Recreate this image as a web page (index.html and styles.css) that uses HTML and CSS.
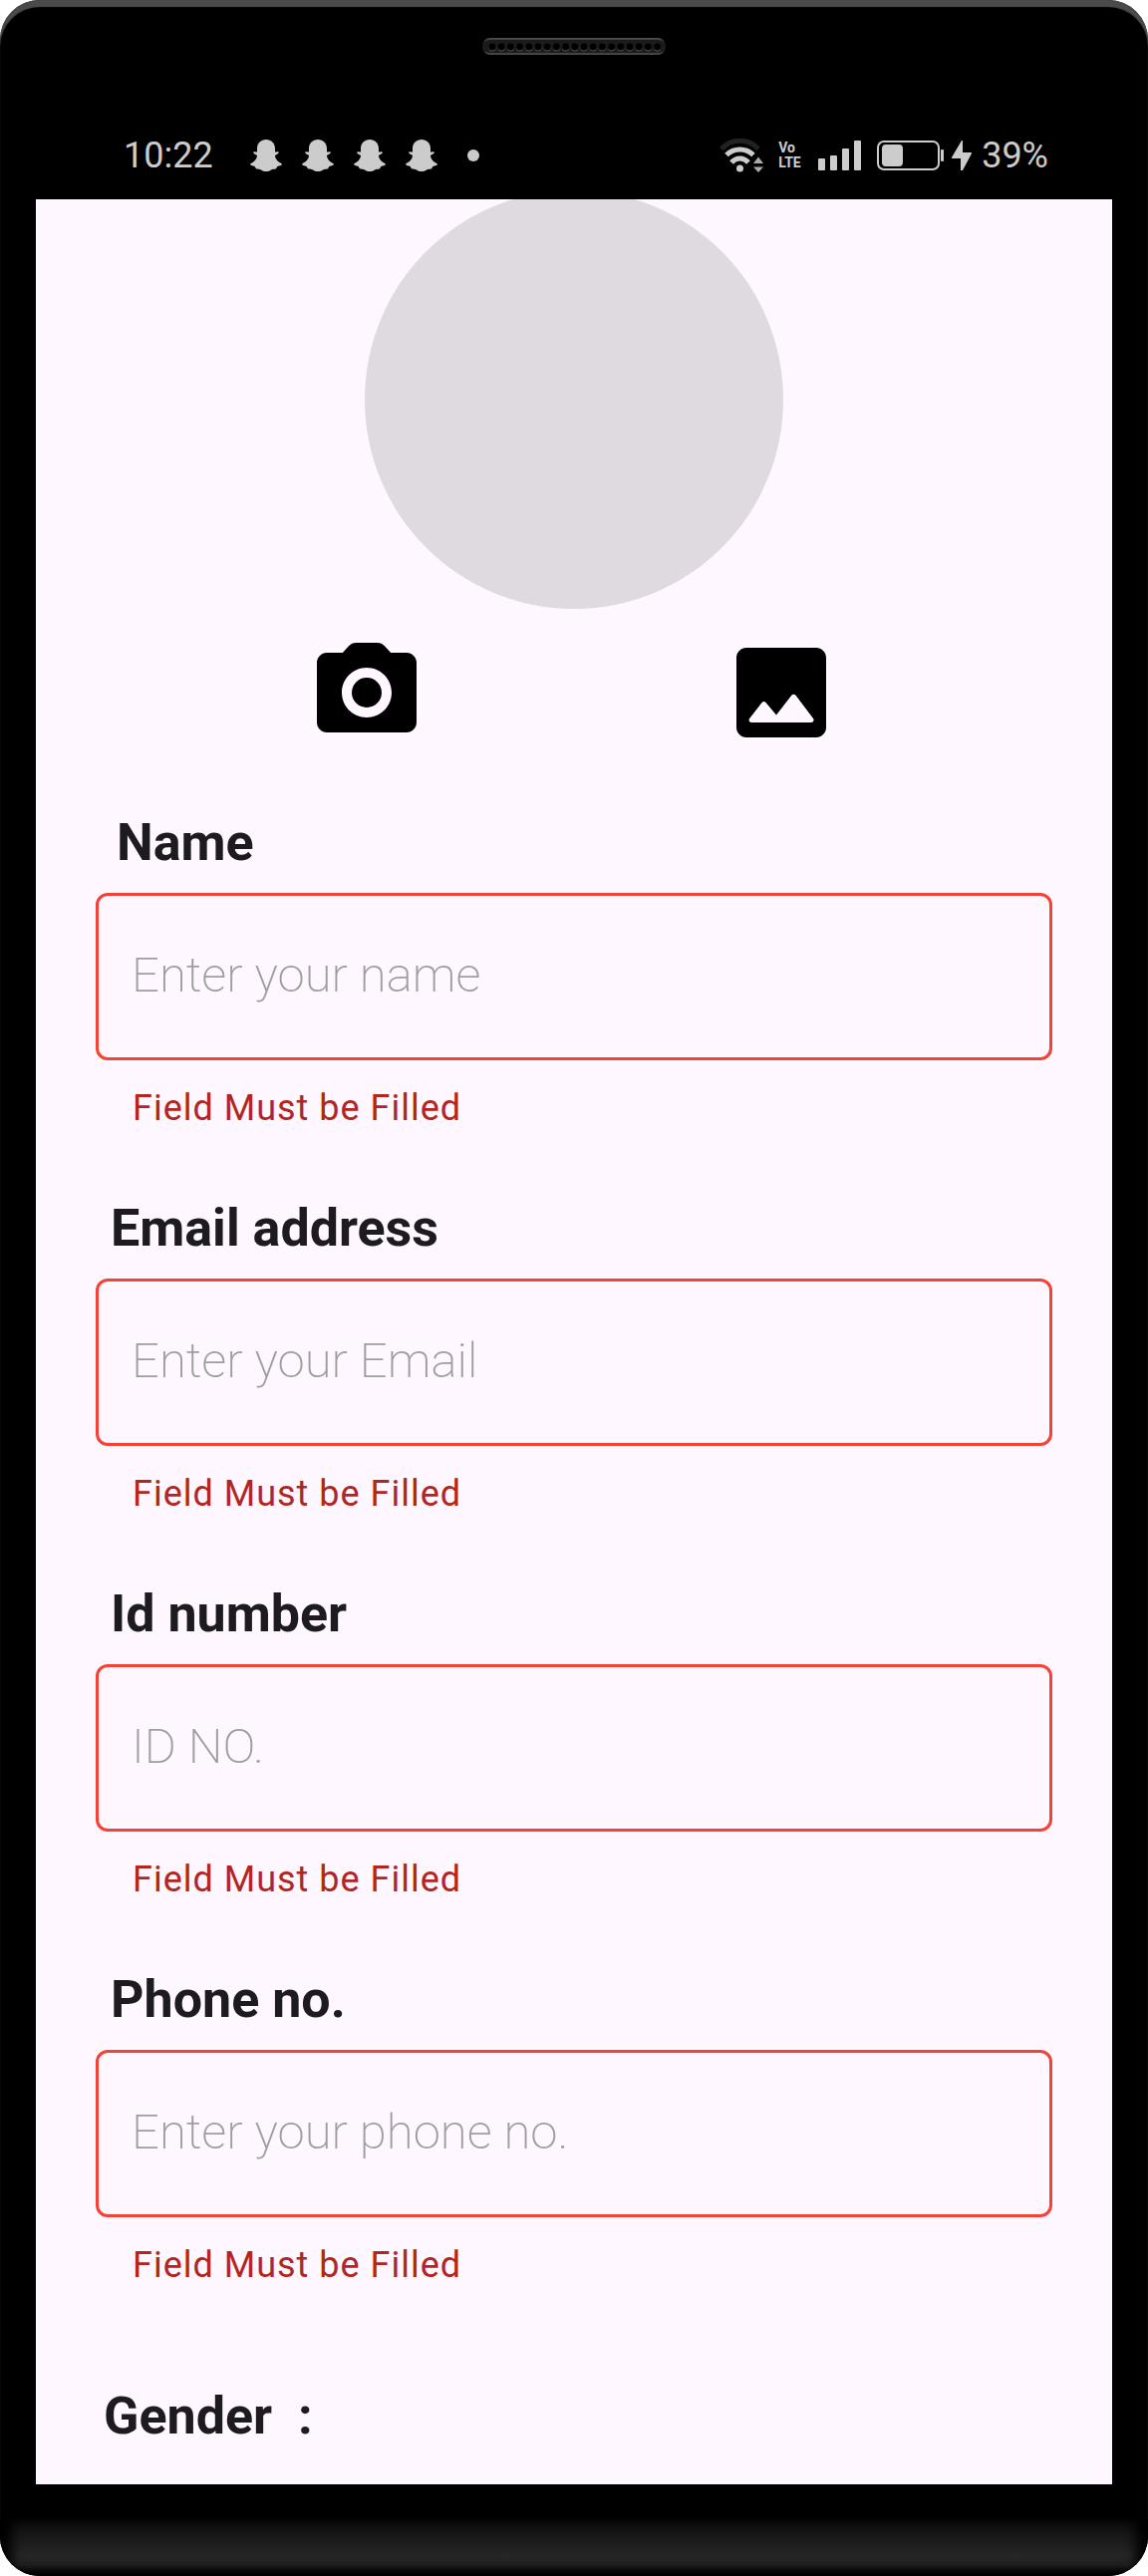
FILE: index.html
```html
<!DOCTYPE html>
<html lang="en">
<head>
<meta charset="utf-8">
<meta name="viewport" content="width=device-width, initial-scale=1">
<title>Profile form</title>
<link rel="stylesheet" href="styles.css">
</head>
<body>
<div class="phone">
  <svg class="speaker" viewBox="0 0 184 18" aria-hidden="true">
    <defs>
      <linearGradient id="grille" x1="0" y1="0" x2="0" y2="1">
        <stop offset="0" stop-color="#4c4c4c"/>
        <stop offset="0.2" stop-color="#1c1c1c"/>
        <stop offset="0.8" stop-color="#1c1c1c"/>
        <stop offset="1" stop-color="#4a4a4a"/>
      </linearGradient>
    </defs>
    <rect x="1" y="1" width="182" height="15" rx="7" fill="#1b1b1b" stroke="url(#grille)" stroke-width="2"/>
    <path d="M10 10H178" stroke="#555" stroke-width="7" stroke-linecap="round" stroke-dasharray="0 9.2"/>
    <path d="M10 9H178" stroke="#000" stroke-width="7" stroke-linecap="round" stroke-dasharray="0 9.2"/>
  </svg>

  <header class="status-bar">
    <div class="status-left">
      <time class="clock">10:22</time>
      <div class="notifications">
        <svg class="ghost" viewBox="0 0 32 32" aria-hidden="true"><path id="ghost-shape" d="M16 0c5 0 9 3.700 9 9v3.500c1 .5 2-.8 3.500 0 1.200 1.200-1.500 2.300-3.500 3.500 0 4 4 7 7 8.500-.5 2-3 1.800-4.500 2.500-1 .5-.5 2-2 2.500-1.500.3-3 0-4.500 1C19.500 31.500 18 32 16 32s-3.500-.5-5-1.500c-1.500-1-3-.7-4.500-1-1.500-.5-1-2-2-2.500C3 26.300.5 26.500 0 24.500 3 23 7 20 7 16c-2-1.200-4.700-2.300-3.500-3.500 1.500-.8 2.500.5 3.500 0V9c0-5.300 4-9 9-9z"/></svg>
        <svg class="ghost" viewBox="0 0 32 32" aria-hidden="true"><use href="#ghost-shape"/></svg>
        <svg class="ghost" viewBox="0 0 32 32" aria-hidden="true"><use href="#ghost-shape"/></svg>
        <svg class="ghost" viewBox="0 0 32 32" aria-hidden="true"><use href="#ghost-shape"/></svg>
      </div>
      <span class="more-dot"></span>
    </div>
    <div class="status-right">
      <svg class="wifi" viewBox="0 0 44 34" aria-hidden="true">
        <path d="M2 10.500C12-.5 29-.5 39 10.500" fill="none" stroke="#222" stroke-width="5"/>
        <path d="M7 16.500C14.500 9 26.500 9 34 16.500" fill="none" stroke="#ccc" stroke-width="5"/>
        <path d="M12 24C17 18.500 24 18.500 29 24" fill="none" stroke="#ccc" stroke-width="5"/>
        <circle cx="20.500" cy="30" r="3.500"/>
        <path d="M39 18.500l5 6.500H34zM39 34l5-5.500H34z" fill="#aaa"/>
      </svg>
      <span class="volte"><span>Vo</span><span>LTE</span></span>
      <svg class="signal" viewBox="0 0 43 31" aria-hidden="true">
        <rect x="0" y="18" width="7" height="12" rx="1"/><rect x="12" y="15" width="7" height="15" rx="1"/>
        <rect x="24" y="8" width="7" height="22" rx="1"/><rect x="36" y="0" width="7" height="30" rx="1"/>
      </svg>
      <svg class="battery" viewBox="0 0 67 32" aria-hidden="true">
        <rect x="1" y="2" width="61" height="28" rx="6" fill="none" stroke="#ccc" stroke-width="2"/>
        <rect x="5" y="5" width="21" height="22" rx="4"/><rect x="64" y="10" width="3" height="12" rx="1"/>
      </svg>
      <svg class="bolt" viewBox="0 0 20 32" aria-hidden="true"><path d="M10 1L0 18c-.3.700 0 1 1 1h8v12h2l9-17c.3-.700 0-1-.700-1H11V1z"/></svg>
      <span class="percent">39%</span>
    </div>
  </header>

  <main class="screen">
    <div class="avatar"></div>
    <div class="photo-actions">
      <button class="icon-button" type="button" aria-label="Take a photo">
        <svg viewBox="0 0 24 24" aria-hidden="true"><circle cx="12" cy="12" r="3"/><path d="M20 4h-3.170l-1.240-1.350c-.37-.41-.91-.65-1.470-.65H9.880c-.56 0-1.100.24-1.480.65L7.170 4H4c-1.100 0-2 .9-2 2v12c0 1.100.9 2 2 2h16c1.100 0 2-.9 2-2V6c0-1.100-.9-2-2-2zm-8 13c-2.760 0-5-2.240-5-5s2.240-5 5-5 5 2.240 5 5-2.240 5-5 5z"/></svg>
      </button>
      <button class="icon-button" type="button" aria-label="Choose a picture">
        <svg viewBox="0 0 24 24" aria-hidden="true"><path d="M21 19V5c0-1.100-.9-2-2-2H5c-1.100 0-2 .9-2 2v14c0 1.100.9 2 2 2h14c1.100 0 2-.9 2-2zM8.900 13.980l2.100 2.530 3.100-3.990c.2-.26.6-.26.8.01l3.510 4.680c.25.33.01.8-.4.8H6.020c-.42 0-.65-.48-.39-.81L8.120 14c.19-.26.57-.27.78-.02z"/></svg>
      </button>
    </div>

    <form class="form" novalidate>
      <div class="field">
        <label class="label label-wide" for="name">Name</label>
        <input class="input" id="name" type="text" placeholder="Enter your name" aria-describedby="name-error">
        <p class="error" id="name-error">Field Must be Filled</p>
      </div>
      <div class="field">
        <label class="label" for="email">Email address</label>
        <input class="input" id="email" type="email" placeholder="Enter your Email" aria-describedby="email-error">
        <p class="error" id="email-error">Field Must be Filled</p>
      </div>
      <div class="field">
        <label class="label" for="id-number">Id number</label>
        <input class="input" id="id-number" type="text" placeholder="ID NO." aria-describedby="id-error">
        <p class="error" id="id-error">Field Must be Filled</p>
      </div>
      <div class="field">
        <label class="label" for="phone">Phone no.</label>
        <input class="input" id="phone" type="tel" placeholder="Enter your phone no." aria-describedby="phone-error">
        <p class="error" id="phone-error">Field Must be Filled</p>
      </div>
      <p class="gender">Gender&nbsp; :</p>
    </form>
  </main>
  <div class="chin"></div>
</div>
</body>
</html>
```
FILE: styles.css
```css
* { box-sizing: border-box; }

body {
  margin: 0;
  background: #fff;
  font-family: Roboto, "Liberation Sans", sans-serif;
}

.phone {
  display: flex;
  flex-direction: column;
  min-height: 100vh;
  overflow: hidden;
  border-radius: 40px;
  background: #000;
  box-shadow: inset 0 7px 1px #4a4a4a;
}

.speaker {
  display: block;
  width: 184px;
  height: 18px;
  margin: 38px auto 0;
}

.status-bar {
  display: flex;
  justify-content: space-between;
  align-items: center;
  height: 88px;
  margin-top: 56px;
  padding: 0 100px 0 124px;
  color: #ccc;
  fill: #ccc;
}

.status-left,
.status-right,
.notifications {
  display: flex;
  align-items: center;
}

.clock,
.percent {
  font-size: 36px;
  line-height: 44px;
}

.notifications {
  gap: 20px;
  margin-left: 37px;
}

.ghost {
  width: 32px;
  height: 32px;
}

.more-dot {
  width: 12px;
  height: 12px;
  margin-left: 30px;
  border-radius: 50%;
  background: #ccc;
}

.wifi { width: 44px; height: 34px; }

.volte {
  display: flex;
  flex-direction: column;
  width: 24px;
  margin-left: 15px;
  font-size: 14px;
  font-weight: 700;
  line-height: 15px;
}

.signal { width: 43px; height: 31px; margin-left: 16px; }
.battery { width: 67px; height: 34px; margin-left: 16px; }
.bolt { width: 20px; height: 32px; margin: 0 10px 0 8px; }

.screen {
  flex: 1;
  margin: 0 36px;
  overflow: hidden;
  background: #fef7ff;
  color: #1d1b20;
}

.avatar {
  width: 420px;
  height: 420px;
  margin: -9px auto 0;
  border-radius: 50%;
  background: #dedae0;
}

.photo-actions {
  display: flex;
  justify-content: center;
  gap: 296px;
  margin-top: 24px;
}

.icon-button {
  width: 120px;
  height: 120px;
  padding: 0;
  border: 0;
  background: none;
}

.icon-button svg {
  display: block;
  width: 120px;
  height: 120px;
}

.form {
  padding: 55px 60px 0;
}

.field {
  display: flex;
  flex-direction: column;
  margin-bottom: 61px;
}

.label,
.gender {
  font-size: 52px;
  font-weight: 700;
  line-height: 72px;
}

.label {
  padding-left: 15px;
  margin-bottom: 14px;
}

.label-wide { padding-left: 21px; }

.input {
  width: 100%;
  height: 168px;
  padding: 0 33px 3px;
  border: 3px solid #f44336;
  border-radius: 12px;
  background: transparent;
  color: #1d1b20;
  font: 200 49px/72px Roboto, "Liberation Sans", sans-serif;
}

.input::placeholder {
  color: #9e9e9e;
  opacity: 1;
}

.error {
  margin: 24px 0 0;
  padding-left: 37px;
  color: #b3261e;
  font-size: 36px;
  line-height: 48px;
  letter-spacing: 1px;
}

.gender {
  margin: 92px 0 0;
  padding-left: 8px;
}

.chin {
  height: 58px;
  margin-top: 34px;
  background: linear-gradient(#0b0b0b, #262626 65%, #202020 80%, #000);
  box-shadow: inset 12px 0 12px #000, inset -12px 0 12px #000;
}
```
